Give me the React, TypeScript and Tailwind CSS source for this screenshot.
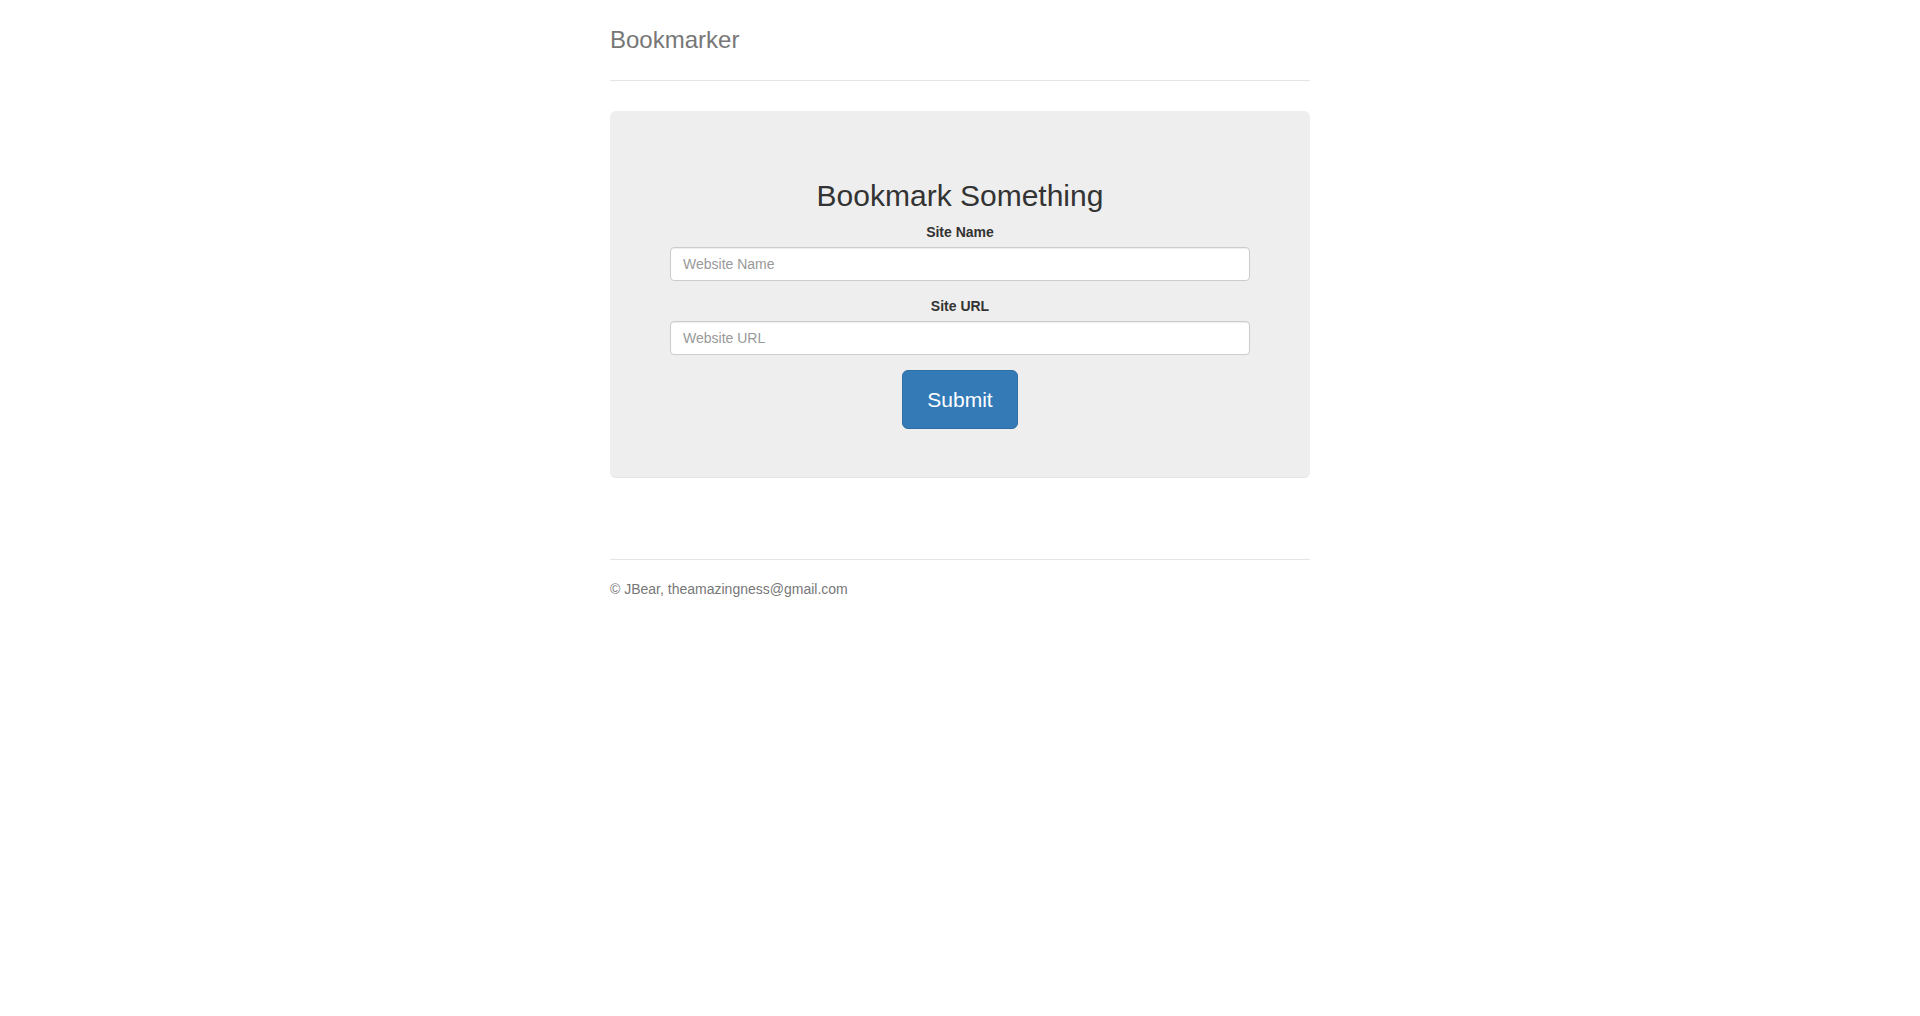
export default function App() {
  return (
    <div className="min-h-screen bg-white pt-5 font-['Liberation_Sans',Arial,sans-serif] text-sm leading-5 text-[#333]">
      <div className="mx-auto max-w-[730px] px-[15px]">
        <div className="mb-[30px] border-b border-[#e5e5e5] pb-5">
          <h3 className="text-2xl leading-10 text-[#777]">Bookmarker</h3>
        </div>

        <div className="mb-[30px] rounded-md border-b border-[#e5e5e5] bg-[#eee] px-[60px] py-12 text-center">
          <h2 className="mt-5 mb-2.5 text-[30px] leading-[33px] font-medium">Bookmark Something</h2>
          <form onSubmit={(e) => e.preventDefault()}>
            <div className="mb-[15px]">
              <label className="mb-[5px] inline-block font-bold">Site Name</label>
              <input
                type="text"
                placeholder="Website Name"
                className="block h-[34px] w-full rounded border border-[#ccc] bg-white px-3 py-1.5 text-sm text-[#555] shadow-[inset_0_1px_1px_rgba(0,0,0,0.075)] outline-none placeholder:text-[#999]"
              />
            </div>
            <div className="mb-[15px]">
              <label className="mb-[5px] inline-block font-bold">Site URL</label>
              <input
                type="text"
                placeholder="Website URL"
                className="block h-[34px] w-full rounded border border-[#ccc] bg-white px-3 py-1.5 text-sm text-[#555] shadow-[inset_0_1px_1px_rgba(0,0,0,0.075)] outline-none placeholder:text-[#999]"
              />
            </div>
            <button
              type="submit"
              className="inline-block h-[59px] rounded-md border border-[#2e6da4] bg-[#337ab7] px-6 pt-px text-[21px] leading-[28px] text-white"
            >
              Submit
            </button>
          </form>
        </div>

        <div className="mt-[81px] border-t border-[#e5e5e5] pt-[19px] text-[#777]">
          <p className="mb-2.5">© JBear, theamazingness@gmail.com</p>
        </div>
      </div>
    </div>
  )
}
